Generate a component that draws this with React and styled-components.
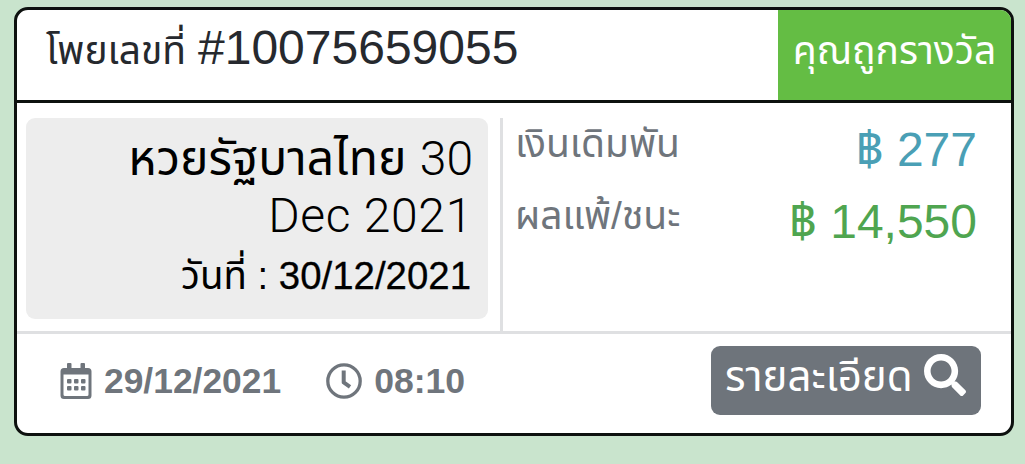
import React from 'react';
import styled, { createGlobalStyle } from 'styled-components';
import { FaSearch } from 'react-icons/fa';

const Global = createGlobalStyle`
  * { box-sizing: border-box; }
  body { margin: 0; background: #c9e4cd; font-family: "Liberation Sans", "Noto Sans Thai", "Noto Sans", sans-serif; }
`;
const Page = styled.main`height: 464px; padding: 7px 11px 28px 14px;`;
const Card = styled.article`
  height: 429px;
  display: flex;
  flex-direction: column;
  border: 3px solid #0d110f;
  border-radius: 14px;
  background: #fff;
  overflow: hidden;
`;
const Text = styled.span`
  display: block;
  white-space: nowrap;
  line-height: 1;
  font-size: ${p => p.$size}px;
  font-weight: ${p => p.$weight || 400};
  color: ${p => p.$color || 'inherit'};
`;
const Light = styled.span`
  font-family: Roboto, sans-serif;
  font-weight: 300;
  letter-spacing: ${p => p.$spacing || 0}px;
`;
const Medium = styled.span`-webkit-text-stroke: 0.3px currentColor;`;
const Header = styled.header`
  height: 93px;
  flex: none;
  display: flex;
  justify-content: space-between;
  border-bottom: 3px solid #0d110f;
`;
const Title = styled.div`
  display: flex;
  align-items: baseline;
  gap: 12px;
  padding: 14px 0 0 29px;
  color: #26292e;
`;
const Status = styled.div`
  width: 233px;
  padding-bottom: 10px;
  display: flex;
  align-items: center;
  justify-content: center;
  background: #64bd44;
  color: #fff;
`;
const Body = styled.section`
  height: 231px;
  flex: none;
  display: flex;
  padding: 15px 9px 0;
  border-bottom: 3px solid #dfe0e2;
`;
const Draw = styled.div`
  width: 462px;
  height: 201px;
  padding: 17px 15px 0 0;
  border-radius: 9px;
  background: #ededed;
  color: #000;
  display: flex;
  flex-direction: column;
  align-items: flex-end;
  gap: 9px;
`;
const DrawDate = styled.div`padding: 8px 2px 0 0;`;
const Amounts = styled.div`
  flex: 1;
  margin-left: 12px;
  border-left: 3px solid #dfe0e2;
  padding: 6px 25px 0 12px;
`;
const Row = styled.div`
  height: 72px;
  display: flex;
  justify-content: space-between;
`;
const Amount = styled.div`padding-top: 2px;`;
const Footer = styled.footer`
  flex: 1;
  display: flex;
  align-items: center;
  padding: 0 30px 6px 43px;
  color: #6f757c;
`;
const Meta = styled.div`
  display: flex;
  align-items: center;
  gap: 12px;
  margin-right: 45px;
`;
const MetaText = styled(Text)`padding-top: 3px;`;
const Button = styled.button`
  margin-left: auto;
  width: 270px;
  height: 69px;
  padding: 0 15px 11px 14px;
  border: 0;
  border-radius: 9px;
  background: #6e747b;
  color: #fff;
  display: flex;
  align-items: center;
  justify-content: space-between;
  font-family: inherit;
`;
const ButtonText = styled(Text)`padding-top: 3px;`;

const CalendarIcon = () => (
  <svg width="32" height="36" viewBox="0 0 32 36" fill="currentColor">
    <path fillRule="evenodd" d="M7 1q0-1 1-1h2.500q1 0 1 1v4h9V1q0-1 1-1H24q1 0 1 1v4h3q3.500 0 3.500 3.500v24Q31.500 36 28 36H4Q.5 36 .5 32.500v-24Q.5 5 4 5h3ZM3.500 11.500v20q0 1.500 1.500 1.500h22q1.500 0 1.500-1.500v-20Z" />
    {[16, 23].map(y => [7, 14, 21].map(x => (
      <rect key={`${x}-${y}`} x={x} y={y} width="4.500" height="4.500" rx="1" />
    )))}
  </svg>
);
const ClockIcon = () => (
  <svg width="36" height="36" viewBox="0 0 36 36" fill="none" stroke="currentColor">
    <circle cx="18" cy="18" r="16.200" strokeWidth="3.300" />
    <path d="M17.700 7.500V19.400L24 23.800" strokeWidth="4" strokeLinejoin="round" />
  </svg>
);

export default function App() {
  return (
    <>
      <Global />
      <Page>
        <Card>
          <Header>
            <Title>
              <Text $size={39}>โพยเลขที่</Text>
              <Text $size={48}>#10075659055</Text>
            </Title>
            <Status><Text $size={39}>คุณถูกรางวัล</Text></Status>
          </Header>
          <Body>
            <Draw>
              <Text $size={48}>หวยรัฐบาลไทย <Light>30</Light></Text>
              <Text $size={48}><Light $spacing={0.7}>Dec 2021</Light></Text>
              <DrawDate><Text $size={38.4}>วันที่ : <Medium>30/12/2021</Medium></Text></DrawDate>
            </Draw>
            <Amounts>
              <Row>
                <Text $size={39} $color="#6f757c">เงินเดิมพัน</Text>
                <Amount><Text $size={48} $color="#4a9fb5">฿ 277</Text></Amount>
              </Row>
              <Row>
                <Text $size={39} $color="#6f757c">ผลแพ้/ชนะ</Text>
                <Amount><Text $size={48} $color="#4fa550">฿ 14,550</Text></Amount>
              </Row>
            </Amounts>
          </Body>
          <Footer>
            <Meta><CalendarIcon /><MetaText $size={35.4} $weight={700}>29/12/2021</MetaText></Meta>
            <Meta><ClockIcon /><MetaText $size={35.6} $weight={700}>08:10</MetaText></Meta>
            <Button><ButtonText $size={42}>รายละเอียด</ButtonText><FaSearch size={42} /></Button>
          </Footer>
        </Card>
      </Page>
    </>
  );
}
